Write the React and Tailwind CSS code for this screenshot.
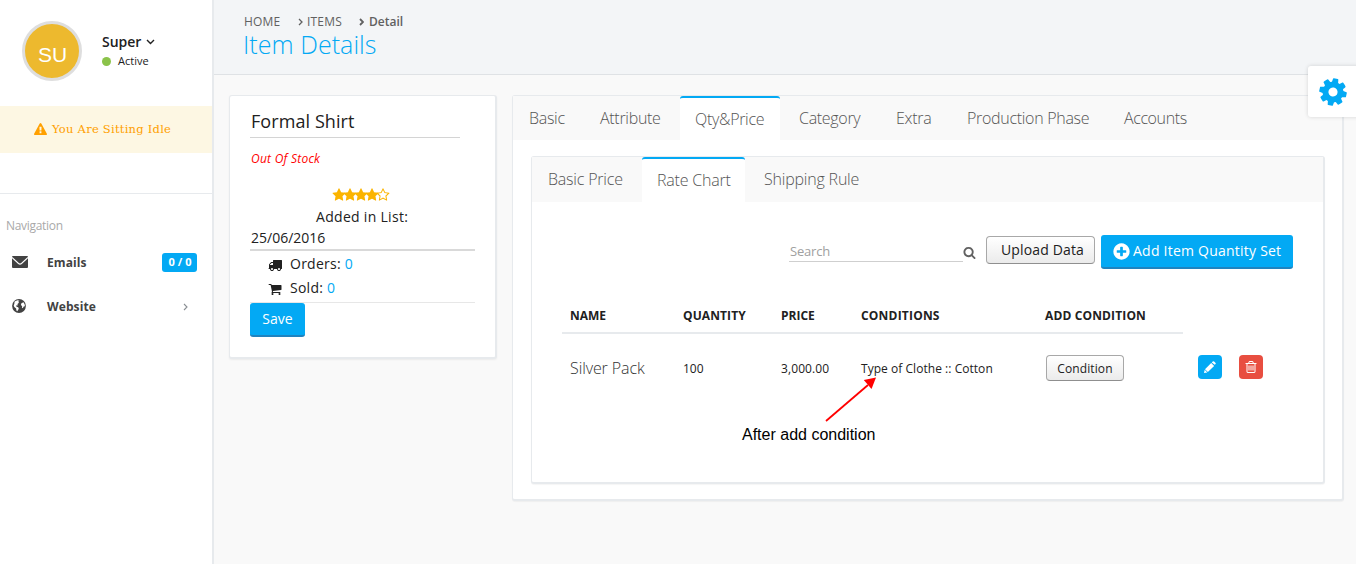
import React from "react";

const PATHS = {
  cog: "M1152 896q0-106-75-181t-181-75-181 75-75 181 75 181 181 75 181-75 75-181zm512-109v222q0 12-8 23t-20 13l-185 28q-19 54-39 91 35 50 107 138 10 12 10 25t-9 23q-27 37-99 108t-94 71q-12 0-26-9l-138-108q-44 23-91 38-16 136-29 186-7 28-36 28h-222q-14 0-24.5-8.5t-11.5-21.5l-28-184q-49-16-90-37l-141 107q-10 9-25 9-14 0-25-11-126-114-165-168-7-10-7-23 0-12 8-23 15-21 51-66.5t54-70.5q-27-50-41-99l-183-27q-13-2-21-12.5t-8-23.5v-222q0-12 8-23t19-13l186-28q14-46 39-92-40-57-107-138-10-12-10-24 0-10 9-23 26-36 98.5-107.5t94.5-71.5q13 0 26 10l138 107q44-23 91-38 16-136 29-186 7-28 36-28h222q14 0 24.5 8.5t11.5 21.5l28 184q49 16 90 37l142-107q9-9 24-9 13 0 25 10 129 119 165 170 7 8 7 22 0 12-8 23-15 21-51 66.5t-54 70.5q26 50 41 98l183 28q13 2 21 12.5t8 23.5z",
  search: "M1216 832q0-185-131.5-316.5t-316.5-131.5-316.5 131.5-131.5 316.5 131.5 316.5 316.5 131.5 316.5-131.5 131.5-316.5zm512 832q0 52-38 90t-90 38q-54 0-90-38l-343-342q-179 124-399 124-143 0-273.5-55.5t-225-150-150-225-55.5-273.5 55.5-273.5 150-225 225-150 273.5-55.5 273.5 55.5 225 150 150 225 55.5 273.5q0 220-124 399l343 343q37 37 37 90z",
  truck: "M640 1408q0-52-38-90t-90-38-90 38-38 90 38 90 90 38 90-38 38-90zm-384-512h384v-256h-158q-13 0-22 9l-195 195q-9 9-9 22v30zm1280 512q0-52-38-90t-90-38-90 38-38 90 38 90 90 38 90-38 38-90zm256-1088v1024q0 15-4 26.5t-13.5 18.5-16.5 11.5-23.5 6-22.5 2-25.5 0-22.5-.5q0 106-75 181t-181 75-181-75-75-181h-384q0 106-75 181t-181 75-181-75-75-181h-64q-3 0-22.5.5t-25.5 0-22.5-2-23.5-6-16.5-11.5-13.5-18.5-4-26.5q0-26 19-45t45-19v-320q0-8-.5-35t0-38 2.5-34.5 6.5-37 14-30.5 22.5-30l198-198q19-19 50.5-32t58.5-13h160v-192q0-26 19-45t45-19h1024q26 0 45 19t19 45z",
  cart: "M704 1536q0 52-38 90t-90 38-90-38-38-90 38-90 90-38 90 38 38 90zm896 0q0 52-38 90t-90 38-90-38-38-90 38-90 90-38 90 38 38 90zm128-1088v512q0 24-16.5 42.5t-40.5 21.5l-1044 122q13 60 13 70 0 16-24 64h920q26 0 45 19t19 45-19 45-45 19h-1024q-26 0-45-19t-19-45q0-11 8-31.5t16-36 21.5-40 15.5-29.5l-177-823h-204q-26 0-45-19t-19-45 19-45 45-19h256q16 0 28.5 6.5t19.5 15.5 13 24.5 8 26 5.5 29.5 4.5 26h1201q26 0 45 19t19 45z",
  star: "M1728 647q0 22-26 48l-363 354 86 500q1 7 1 20 0 21-10.5 35.5t-30.5 14.5q-19 0-40-12l-449-236-449 236q-22 12-40 12-21 0-31.5-14.5t-10.5-35.5q0-6 2-20l86-500-364-354q-25-27-25-48 0-37 56-46l502-73 225-455q19-41 49-41t49 41l225 455 502 73q56 9 56 46z",
  starO: "M1201 1004l306-297-422-62-189-382-189 382-422 62 306 297-73 421 378-199 377 199zm527-357q0 22-26 48l-363 354 86 500q1 7 1 20 0 50-41 50-19 0-40-12l-449-236-449 236q-22 12-40 12-21 0-31.5-14.5t-10.5-35.5q0-6 2-20l86-500-364-354q-25-27-25-48 0-37 56-46l502-73 225-455q19-41 49-41t49 41l225 455 502 73q56 9 56 46z",
  trash: "M704 736v576q0 14-9 23t-23 9h-64q-14 0-23-9t-9-23v-576q0-14 9-23t23-9h64q14 0 23 9t9 23zm256 0v576q0 14-9 23t-23 9h-64q-14 0-23-9t-9-23v-576q0-14 9-23t23-9h64q14 0 23 9t9 23zm256 0v576q0 14-9 23t-23 9h-64q-14 0-23-9t-9-23v-576q0-14 9-23t23-9h64q14 0 23 9t9 23zm128 724v-948h-896v948q0 22 7 40.5t14.5 27 10.5 8.5h832q3 0 10.5-8.5t14.5-27 7-40.5zm-672-1076h448l-48-117q-7-9-17-11h-317q-10 2-17 11zm928 32v64q0 14-9 23t-23 9h-96v948q0 83-47 143.5t-113 60.5h-832q-66 0-113-58.5t-47-141.5v-952h-96q-14 0-23-9t-9-23v-64q0-14 9-23t23-9h309l70-167q15-37 54-63t79-26h320q40 0 79 26t54 63l70 167h309q14 0 23 9t9 23z",
  plus: "M1344 960v-128q0-26-19-45t-45-19h-256v-256q0-26-19-45t-45-19h-128q-26 0-45 19t-19 45v256h-256q-26 0-45 19t-19 45v128q0 26 19 45t45 19h256v256q0 26 19 45t45 19h128q26 0 45-19t19-45v-256h256q26 0 45-19t19-45zm320-64q0 209-103 385.5t-279.5 279.5-385.5 103-385.5-103-279.5-279.5-103-385.5 103-385.5 279.5-279.5 385.5-103 385.5 103 279.5 279.5 103 385.5z",
  warning: "M1024 1375v-190q0-14-9.5-23.5t-22.5-9.5h-192q-13 0-22.5 9.5t-9.5 23.5v190q0 14 9.5 23.5t22.5 9.5h192q13 0 22.5-9.5t9.5-23.5zm-2-374l18-459q0-12-10-19-13-11-24-11h-220q-11 0-24 11-10 7-10 21l17 457q0 10 10 16.5t24 6.5h185q14 0 23.5-6.5t10.5-16.5zm-14-934l768 1408q35 63-2 126-17 29-46.5 46t-63.5 17h-1536q-34 0-63.5-17t-46.5-46q-37-63-2-126l768-1408q17-31 47-49t65-18 65 18 47 49z",
};

const Icon = ({ name, className }) => (
  <svg viewBox="0 0 1792 1792" fill="currentColor" className={`shrink-0 ${className}`}>
    <path d={PATHS[name]} />
  </svg>
);

const Chevron = ({ className, d = "M1 1l3 3-3 3", box = "0 0 5 8", w = 1.3 }) => (
  <svg viewBox={box} fill="none" stroke="currentColor" strokeWidth={w} className={`shrink-0 ${className}`}>
    <path d={d} />
  </svg>
);

function Sidebar() {
  return (
    <aside className="flex h-full w-[214px] shrink-0 flex-col border-r-2 border-[#e7eaed] bg-white">
      <div className="flex h-[106px] pl-[22px] pt-[21px]">
        <div className="flex size-[60px] items-center justify-center rounded-full border-[3px] border-[#dedede] bg-[#edb92e] pl-px pt-[6px] font-['Liberation_Sans',sans-serif] text-[21px] leading-none text-white">
          SU
        </div>
        <div className="ml-[20px] pt-[10px]">
          <div className="flex h-5 items-center text-[14px] font-semibold text-[#212121]">
            Super
            <Chevron className="ml-[5px] mt-[2px] h-[6px] w-[9px]" box="0 0 9 6" d="M1 1l3.5 3.5L8 1" w={1.4} />
          </div>
          <div className="mt-px flex h-[18px] items-center text-[11px] text-[#212121]">
            <span className="mr-[7px] size-[9px] rounded-full bg-[#8bc34a]" />
            Active
          </div>
        </div>
      </div>
      <div className="flex h-[47px] items-center bg-[#fdf7e3] pl-[34px] font-['DejaVu_Serif',serif] text-[11.5px] tracking-[0.25px] text-[#ffa000]">
        <Icon name="warning" className="mr-[5px] size-[13px]" />
        <span className="whitespace-nowrap pt-px">You Are Sitting Idle</span>
      </div>
      <div className="h-[41px] border-b border-[#e7eaed]" />
      <div className="flex h-[46px] items-center pl-[6px] pt-[18px] text-[12px] tracking-[-0.3px] text-[#a9a9a9]">Navigation</div>
      <div className="flex h-[44px] items-center pl-[12px] text-[12px] font-bold text-[#424242]">
        <svg viewBox="0 0 16 12" className="h-3 w-4" fill="none">
          <rect width="16" height="12" rx="1" fill="#424242" />
          <path d="M0 1.500l6.500 6q1.500 1.200 3 0L16 1.500" stroke="#fff" strokeWidth="1.1" />
        </svg>
        <span className="ml-[19px] w-[115px] pt-[2px] tracking-[0.1px]">Emails</span>
        <span className="flex h-[19px] w-[35px] items-center justify-center rounded-[3px] bg-[#03a9f4] pl-px text-[11px] text-white">
          0 / 0
        </span>
      </div>
      <div className="flex h-[44px] items-center pl-[12px] text-[12px] font-bold text-[#424242]">
        <svg viewBox="0 0 14 14" className="size-[14px]">
          <circle cx="7" cy="7" r="6.9" fill="#424242" />
          <path
            fill="#fff"
            d="M2.600 2.400L5.400 1.300l2.100.4-1.500 1.200 1.200.6-1.700 1.500.2 1.500-1.500-.3.3 1.500 1.700.6.6 1.500-1.500 2.400-.9-.6-.3-2.100-1.800-1.500-.6-1.500.6-1.500zM9.400 4.200l2.100-.9 1.200 2.100.2 1.800-1.200.3-.9 1.800-.9-.9.3-1.200-1.300-1.200z"
          />
        </svg>
        <span className="ml-[21px] w-[136px] pt-[2px] tracking-[0.1px]">Website</span>
        <Chevron className="mt-[2px] h-[8px] w-[5px] text-[#8a8f94]" w={1.1} />
      </div>
    </aside>
  );
}

function Header() {
  return (
    <header className="h-[75px] border-b border-[#dfe2e5] bg-[#f3f5f7] pl-[30px] pt-[12px]">
      <div className="flex h-[19px] items-center text-[12px] leading-[16px] text-[#616161]">
        <span className="w-[54px] tracking-[0.2px]">HOME</span>
        <Chevron className="mr-[4px] h-[8px] w-[5px]" />
        <span className="w-[52px] tracking-[0.2px]">ITEMS</span>
        <Chevron className="mr-[5px] h-[8px] w-[5px]" w={1.8} />
        <span className="font-semibold">Detail</span>
      </div>
      <h1 className="-ml-px text-[25px] font-light leading-[26px] tracking-[0.05px] text-[#03a9f4]">Item Details</h1>
    </header>
  );
}

function ItemCard() {
  return (
    <section className="h-[264px] w-[268px] shrink-0 rounded-[3px] border border-[#e7eaed] border-r-2 border-b-2 bg-white pl-[20px] text-[14px] text-[#212121] shadow-[0_1px_2px_rgba(0,0,0,0.06)]">
      <h2 className="h-[42px] w-[210px] border-b border-[#d4d4d4] pl-px pt-[10px] text-[18px] leading-[30px] tracking-[0.08px]">
        Formal Shirt
      </h2>
      <div className="h-[49px] pl-px pt-[11px] text-[12px] italic leading-[20px] tracking-[0.25px] text-[#f00]">Out Of Stock</div>
      <div className="-mt-[2px] flex h-[19px] w-[222px] items-center justify-center text-[#fbb400]">
        {[0, 1, 2, 3].map((i) => (
          <Icon key={i} name="star" className="mx-[-1.5px] size-[14px]" />
        ))}
        <Icon name="starO" className="mx-[-1.5px] size-[14px]" />
      </div>
      <div className="mt-[2px] h-[21px] pl-[66px] leading-[21px] tracking-[0.3px]">Added in List:</div>
      <div className="h-[24px] w-[225px] border-b-2 border-[#d9d9d9] pl-px leading-[21px]">25/06/2016</div>
      <div className="h-[52px] w-[225px] border-b border-[#e7e7e7] pl-[18px]">
        <div className="flex h-6 items-center tracking-[0.25px]">
          <Icon name="truck" className="mr-[8px] mt-[3px] size-[14px]" />
          Orders:&nbsp;<span className="text-[#03a9f4]">0</span>
        </div>
        <div className="flex h-6 items-center tracking-[0.25px]">
          <Icon name="cart" className="mr-[8px] mt-[3px] size-[14px]" />
          Sold:&nbsp;<span className="text-[#03a9f4]">0</span>
        </div>
      </div>
      <button className="block h-[34px] w-[55px] rounded-[3px] border-b-2 border-[#1f83bf] bg-[#03a9f4] text-[14px] leading-[30px] text-white">
        Save
      </button>
    </section>
  );
}

const MAIN_TABS = [
  ["Basic", "w-[71px]"],
  ["Attribute", "w-[95px]"],
  ["Qty&Price", "w-[100px]", true],
  ["Category", "ml-[4px] w-[97px]"],
  ["Extra", "w-[71px]"],
  ["Production Phase", "w-[157px]"],
  ["Accounts", "w-[92px] tracking-[-0.4px]"],
];
const SUB_TABS = [
  ["Basic Price", "w-[109px]"],
  ["Rate Chart", "w-[103px]", true],
  ["Shipping Rule", "ml-[4px] w-[130px]"],
];

function Tabs({ items, className, activeLine }) {
  return (
    <nav className={`flex bg-[#f9f9f9] text-[16px] font-light text-[#555] ${className}`}>
      {items.map(([label, size, active]) => (
        <div
          key={label}
          className={`${size} whitespace-nowrap pl-[15px] ${
            active ? `rounded-t-[3px] border-t-2 border-[#03a9f4] bg-white ${activeLine}` : "leading-[45px]"
          }`}
        >
          {label}
        </div>
      ))}
    </nav>
  );
}

const GREY_BUTTON =
  "rounded-[4px] border border-[#a8a8a8] border-b-[#8f8f8f] bg-linear-to-b from-white to-[#ebebeb] text-[#212121]";

function RateChart() {
  return (
    <div className="h-[328px] w-[794px] rounded-[3px] border border-[#e7eaed] border-r-2 border-b-2 bg-white shadow-[0_1px_1px_rgba(0,0,0,0.04)]">
      <Tabs items={SUB_TABS} activeLine="leading-[43px]" className="h-[45px] pl-px tracking-[-0.2px]" />
      <div className="flex h-[102px] pl-[257px] pt-[33px]">
        <div className="mt-[3px] h-[24px] w-[174px] border-b border-[#cfcfcf] pl-px text-[13px] leading-[26px] tracking-[-0.2px] text-[#a0a0a0]">
          Search
        </div>
        <Icon name="search" className="mt-[11px] size-[13px] text-[#616161]" />
        <button className={`${GREY_BUTTON} ml-[10px] mt-px h-[28px] w-[109px] pb-px pl-[4px] text-[14px] tracking-[0.15px]`}>
          Upload Data
        </button>
        <button className="ml-[6px] flex h-[34px] w-[192px] items-center rounded-[3px] border-b-2 border-[#1f83bf] bg-[#03a9f4] pl-[11px] text-[14px] text-white">
          <Icon name="plus" className="mr-[2px] size-[19px]" />
          <span className="whitespace-nowrap pb-px tracking-[0.23px]">Add Item Quantity Set</span>
        </button>
      </div>
      <div className="ml-[30px] flex h-[30px] w-[621px] border-b-2 border-[#e7eaed] pl-[8px] text-[12px] font-bold leading-[24px] text-[#212121]">
        <span className="w-[113px]">NAME</span>
        <span className="w-[98px] tracking-[0.1px]">QUANTITY</span>
        <span className="w-[80px]">PRICE</span>
        <span className="w-[184px] tracking-[0.2px]">CONDITIONS</span>
        <span className="whitespace-nowrap tracking-[0.14px]">ADD CONDITION</span>
      </div>
      <div className="ml-[38px] flex h-[68px] items-center text-[12px] text-[#212121]">
        <span className="w-[113px] text-[16px] font-light tracking-[-0.1px] text-[#333]">Silver Pack</span>
        <span className="w-[98px] pt-[2px]">100</span>
        <span className="w-[80px] pt-[2px] tracking-[0.1px]">3,000.00</span>
        <span className="w-[185px] pt-[2px] tracking-[0.04px]">Type of Clothe :: Cotton</span>
        <button className={`${GREY_BUTTON} h-[26px] w-[78px] pt-[2px] text-[12px] tracking-[0.1px]`}>Condition</button>
        <button className="-mt-[2px] ml-[74px] flex size-6 items-center justify-center rounded-[4px] bg-[#03a9f4] text-white">
          <svg viewBox="0 0 12 12" className="size-3" fill="currentColor">
            <path d="M8.700.500l.7-.3q.4 0 .7.200l1.500 1.500q.4.500 0 1l-.9.900L7.800 1.400zM7.200 2l2.900 2.900-6.200 6.200L1 8.200zM.7 8.800l2.600 2.600L0 12z" />
          </svg>
        </button>
        <button className="-mt-[2px] ml-[17px] flex size-6 items-center justify-center rounded-[4px] bg-[#e84e40] text-white">
          <Icon name="trash" className="size-[14px]" />
        </button>
      </div>
    </div>
  );
}

export default function App() {
  return (
    <div className="relative flex h-[564px] w-[1356px] overflow-hidden bg-[#f9f9f9] font-['Open_Sans',sans-serif]">
      <Sidebar />
      <div className="flex-1">
        <Header />
        <main className="flex gap-[15px] pl-[15px] pt-[20px]">
          <ItemCard />
          <section className="h-[406px] w-[832px] rounded-[3px] border border-[#e7eaed] border-r-2 border-b-2 bg-white shadow-[0_1px_1px_rgba(0,0,0,0.04)]">
            <Tabs items={MAIN_TABS} activeLine="leading-[43px]" className="h-[44px] pl-px tracking-[-0.3px]" />
            <div className="pl-[18px] pt-[16px]">
              <RateChart />
            </div>
          </section>
        </main>
      </div>
      <div className="absolute left-[1308px] top-[66px] flex h-[51px] w-[54px] items-center rounded-[3px] bg-white pl-[9px] shadow-[0_0_4px_rgba(0,0,0,0.15)]">
        <Icon name="cog" className="size-[32px] rotate-[12deg] text-[#03a9f4]" />
      </div>
      <svg className="absolute left-[820px] top-[370px] h-[56px] w-[60px]" viewBox="0 0 60 56" fill="#f00">
        <path d="M6 51L48 15" stroke="#f00" strokeWidth="1.8" />
        <path d="M56 7.500L51.500 19 43.800 10z" />
      </svg>
      <div className="absolute left-[742px] top-[425px] whitespace-nowrap font-['Liberation_Sans',sans-serif] text-[16px] leading-[20px] text-black">
        After add condition
      </div>
    </div>
  );
}
